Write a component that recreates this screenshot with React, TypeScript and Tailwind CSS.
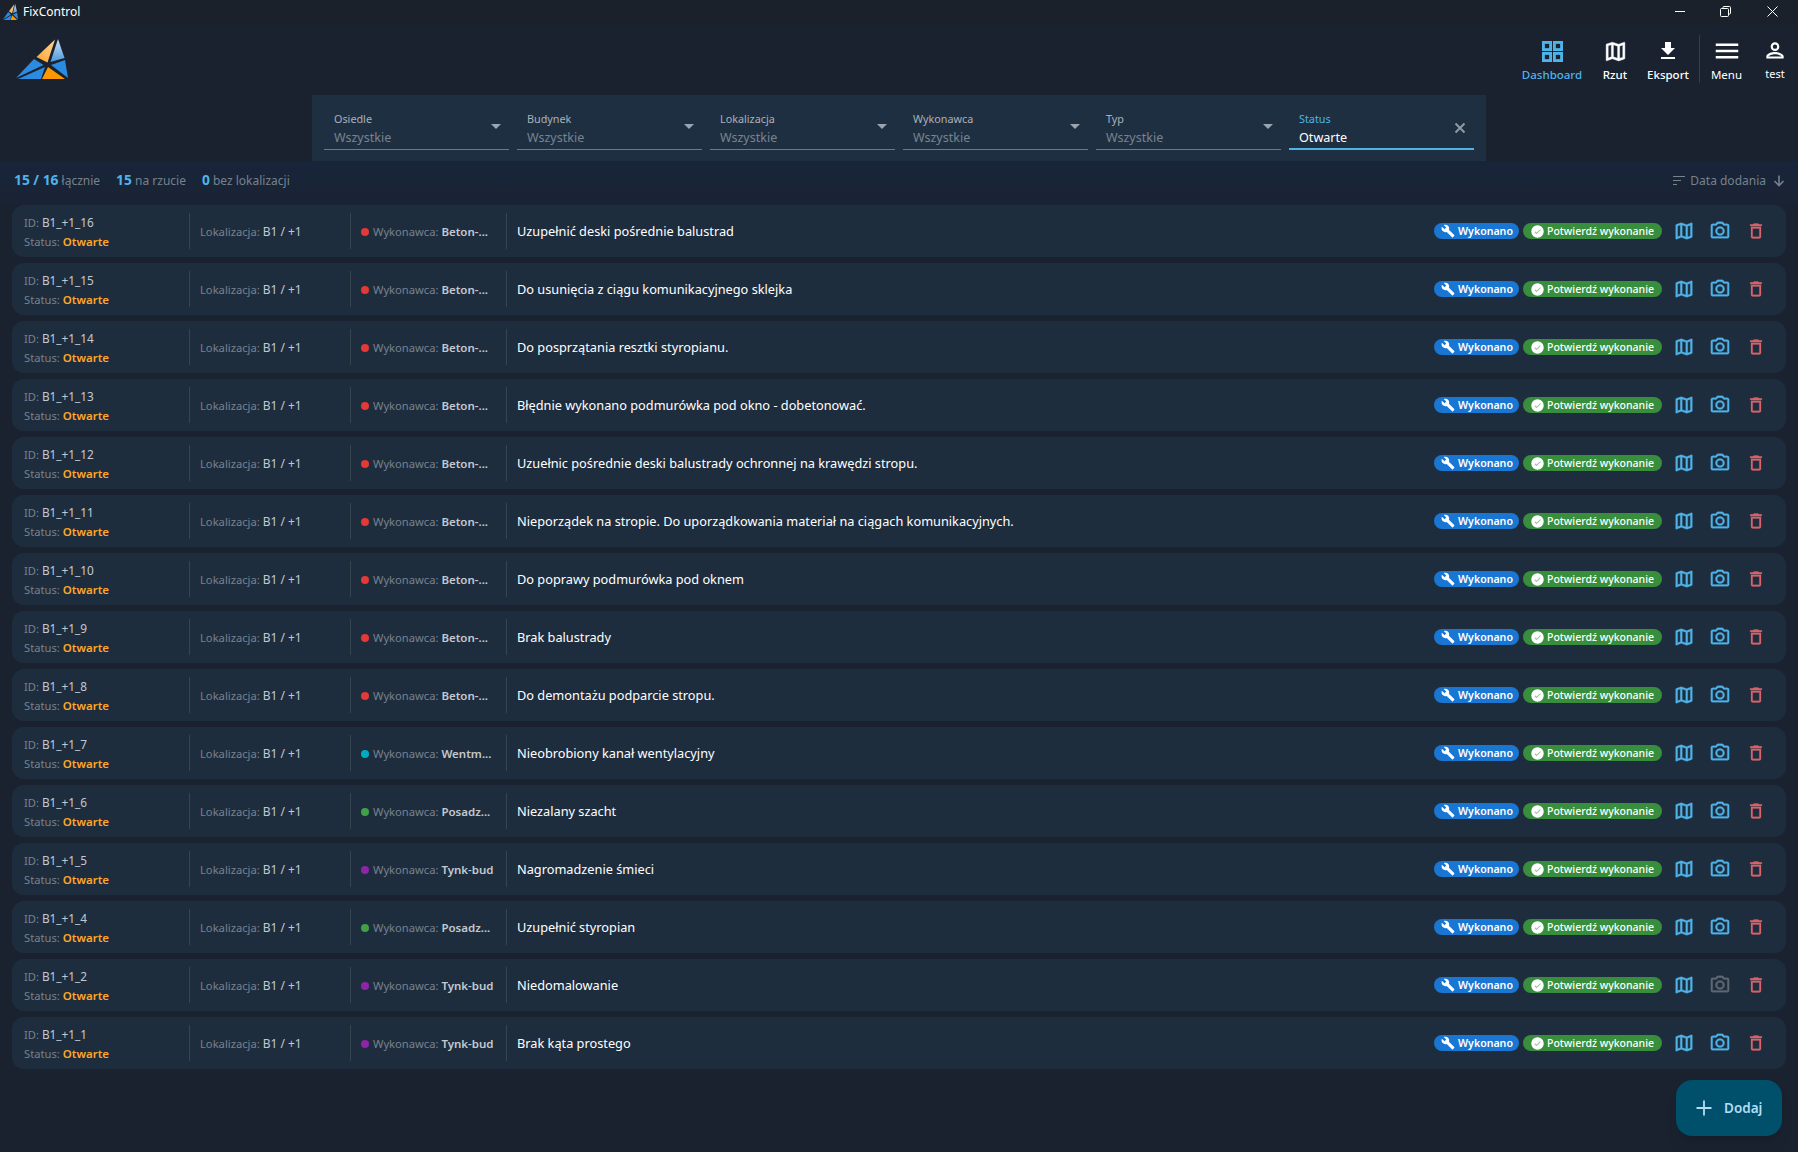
import { ReactNode } from 'react';

const Logo = ({ className }: { className: string }) => (
  <svg className={className} viewBox="0 0 52 40" fill="none" preserveAspectRatio="none">
    <defs>
      <linearGradient id="lb" x1="0" y1="0" x2="0" y2="1">
        <stop offset="0" stopColor="#cfe3f5" />
        <stop offset="1" stopColor="#4a98dc" />
      </linearGradient>
      <linearGradient id="lo" x1="1" y1="0" x2="0" y2="1">
        <stop offset="0" stopColor="#ffd79a" />
        <stop offset="1" stopColor="#ffa22e" />
      </linearGradient>
    </defs>
    <path d="M39 0.5 L20.5 18 L31.5 23.5 Z" fill="url(#lo)" />
    <path d="M42 0 L34.5 23 L48.5 19 Z" fill="url(#lb)" />
    <path d="M18 20 L0 39 L27.5 26 Z" fill="#2b8be0" />
    <path d="M29 28 L2 40 L25 40 Z" fill="#2b8be0" />
    <path d="M35 26 L49 21 L52 39 Z" fill="#2b8be0" />
    <path d="M32 28 L26 40 L49 40 Z" fill="#ff9800" />
  </svg>
);

const Caret = () => <div className="h-0 w-0 border-x-[5px] border-t-[5px] border-x-transparent border-t-[#9aa5b1]" />;

const filters = ['Osiedle', 'Budynek', 'Lokalizacja', 'Wykonawca', 'Typ'];

const Filter = ({ label }: { label: string }) => (
  <div className="relative flex h-[55px] w-[185px] flex-col justify-end border-b border-[#6b7a86] pl-[10px]">
    <div className="text-[10.8px] leading-[16px] text-[#a9b1ba]">{label}</div>
    <div className="text-[12.5px] leading-[22px] text-[#77838f]">Wszystkie</div>
    <div className="absolute right-[8px] top-[29px]">
      <Caret />
    </div>
  </div>
);

const NavItem = ({ label, w, active, light, children }: { label: string; w: string; active?: boolean; light?: boolean; children: ReactNode }) => (
  <div className={`flex flex-col items-center ${w}`}>
    <div className="flex h-[32px] items-center justify-center">{children}</div>
    <div
      className={`-mt-[1px] text-[11.5px] leading-[18px] ${light ? 'font-normal text-[#e4e6e8]' : 'font-medium'} ${
        active ? 'text-[#4fb3e8]' : 'text-white'
      }`}
    >
      {label}
    </div>
  </div>
);

const MapIcon = ({ className }: { className: string }) => (
  <svg className={className} viewBox="0 0 24 24" fill="currentColor" stroke="currentColor" strokeWidth="0.4">
    <path d="M20.5 3l-.16.03L15 5.1 9 3 3.36 4.9c-.21.07-.36.25-.36.48V20.5c0 .28.22.5.5.5l.16-.03L9 18.9l6 2.1 5.64-1.9c.21-.07.36-.25.36-.48V3.5c0-.28-.22-.5-.5-.5zM10 5.47l4 1.4v11.66l-4-1.4V5.47zm-5 .99l3-1.01v11.7l-3 1.16V6.46zm14 11.08l-3 1.01V6.86l3-1.16v11.84z" />
  </svg>
);

const CameraIcon = ({ className }: { className: string }) => (
  <svg className={className} viewBox="0 0 24 24" fill="currentColor" stroke="currentColor" strokeWidth="0.3">
    <path d="M20 4h-3.17L15 2H9L7.17 4H4c-1.1 0-2 .9-2 2v12c0 1.1.9 2 2 2h16c1.1 0 2-.9 2-2V6c0-1.1-.9-2-2-2zm0 14H4V6h4.05l1.83-2h4.24l1.83 2H20v12zM12 7a5 5 0 100 10 5 5 0 000-10zm0 8a3 3 0 110-6 3 3 0 010 6z" />
  </svg>
);

const TrashIcon = ({ className }: { className: string }) => (
  <svg className={className} viewBox="0 0 24 24" fill="currentColor" stroke="currentColor" strokeWidth="0.3">
    <path d="M6 19c0 1.1.9 2 2 2h8c1.1 0 2-.9 2-2V7H6v12zM8 9h8v10H8V9zm7.5-5l-1-1h-5l-1 1H5v2h14V4h-3.5z" />
  </svg>
);

const WrenchIcon = () => (
  <svg className="h-[14px] w-[14px] text-white" viewBox="0 0 24 24" fill="currentColor">
    <path d="M22.7 19l-9.1-9.1c.9-2.3.4-5-1.5-6.9-2-2-5-2.4-7.4-1.3L9 6 6 9 1.6 4.7C.4 7.1.9 10.1 2.9 12.1c1.9 1.9 4.6 2.4 6.9 1.5l9.1 9.1c.4.4 1 .4 1.4 0l2.3-2.3c.5-.4.5-1.1.1-1.4z" />
  </svg>
);

const CheckIcon = () => (
  <svg className="h-[13px] w-[13px]" viewBox="0 0 24 24">
    <circle cx="12" cy="12" r="11.5" fill="#fff" />
    <path d="M7 12.5l3.2 3.2L17.5 8.5" stroke="#a5c9a7" strokeWidth="2.2" fill="none" />
  </svg>
);

type Issue = { id: string; dot: string; who: string; text: string; noPhoto?: boolean };

const issues: Issue[] = [
  { id: 'B1_+1_16', dot: 'bg-[#e53935]', who: 'Beton-...', text: 'Uzupełnić deski pośrednie balustrad' },
  { id: 'B1_+1_15', dot: 'bg-[#e53935]', who: 'Beton-...', text: 'Do usunięcia z ciągu komunikacyjnego sklejka' },
  { id: 'B1_+1_14', dot: 'bg-[#e53935]', who: 'Beton-...', text: 'Do posprzątania resztki styropianu.' },
  { id: 'B1_+1_13', dot: 'bg-[#e53935]', who: 'Beton-...', text: 'Błędnie wykonano podmurówka pod okno - dobetonować.' },
  { id: 'B1_+1_12', dot: 'bg-[#e53935]', who: 'Beton-...', text: 'Uzuełnic pośrednie deski balustrady ochronnej na krawędzi stropu.' },
  { id: 'B1_+1_11', dot: 'bg-[#e53935]', who: 'Beton-...', text: 'Nieporządek na stropie. Do uporządkowania materiał na ciągach komunikacyjnych.' },
  { id: 'B1_+1_10', dot: 'bg-[#e53935]', who: 'Beton-...', text: 'Do poprawy podmurówka pod oknem' },
  { id: 'B1_+1_9', dot: 'bg-[#e53935]', who: 'Beton-...', text: 'Brak balustrady' },
  { id: 'B1_+1_8', dot: 'bg-[#e53935]', who: 'Beton-...', text: 'Do demontażu podparcie stropu.' },
  { id: 'B1_+1_7', dot: 'bg-[#00acc1]', who: 'Wentm...', text: 'Nieobrobiony kanał wentylacyjny' },
  { id: 'B1_+1_6', dot: 'bg-[#43a047]', who: 'Posadz...', text: 'Niezalany szacht' },
  { id: 'B1_+1_5', dot: 'bg-[#8e24aa]', who: 'Tynk-bud', text: 'Nagromadzenie śmieci' },
  { id: 'B1_+1_4', dot: 'bg-[#43a047]', who: 'Posadz...', text: 'Uzupełnić styropian' },
  { id: 'B1_+1_2', dot: 'bg-[#8e24aa]', who: 'Tynk-bud', text: 'Niedomalowanie', noPhoto: true },
  { id: 'B1_+1_1', dot: 'bg-[#8e24aa]', who: 'Tynk-bud', text: 'Brak kąta prostego' },
];

const Row = ({ issue }: { issue: Issue }) => (
  <div className="flex h-[52px] items-center rounded-[12px] bg-[#1e2d3e] text-[11.2px] text-[#77828e]">
    <div className="flex h-[36px] w-[178px] flex-col justify-center border-r border-[#37444f] pl-[12px] pt-[2px] leading-[19.5px]">
      <div>
        ID: <span className="text-[11.8px] text-[#c3c9cf]">{issue.id}</span>
      </div>
      <div>
        Status: <span className="text-[11.5px] font-semibold text-[#ffa726]">Otwarte</span>
      </div>
    </div>
    <div className="flex h-[36px] w-[161px] items-center border-r border-[#37444f] pl-[10px] pt-[2px]">
      Lokalizacja:&nbsp;<span className="text-[12px] text-[#c3c9cf]">B1 / +1</span>
    </div>
    <div className="flex h-[36px] w-[156px] items-center whitespace-nowrap border-r border-[#37444f] pl-[10px] pt-[2px]">
      <div className={`mr-[4px] h-[8px] w-[8px] rounded-full ${issue.dot}`} />
      Wykonawca:&nbsp;<span className="text-[11.5px] font-semibold text-[#c3c9cf]">{issue.who}</span>
    </div>
    <div className="flex-1 pl-[10px] pt-[2px] text-[12.75px] text-white">{issue.text}</div>
    <div className="flex h-[16px] w-[85px] items-center gap-[3px] rounded-full bg-[#1976d2] pl-[7px] text-[10.6px] font-semibold text-white">
      <WrenchIcon />
      <span className="pt-[1px]">Wykonano</span>
    </div>
    <div className="ml-[4px] flex h-[16px] w-[139px] items-center gap-[3px] rounded-full bg-[#388e3c] pl-[8px] text-[10.5px] font-medium text-white">
      <CheckIcon />
      <span className="pt-[1px]">Potwierdź wykonanie</span>
    </div>
    <MapIcon className="ml-[11px] h-[22px] w-[22px] text-[#4fb3e8]" />
    <CameraIcon className={`ml-[14px] h-[22px] w-[22px] ${issue.noPhoto ? 'text-[#5d6873]' : 'text-[#4fb3e8]'}`} />
    <TrashIcon className="ml-[15px] mr-[20px] h-[20px] w-[20px] text-[#d9636a]" />
  </div>
);

export default function App() {
  return (
    <div className="relative flex h-[1152px] w-[1798px] flex-col overflow-hidden bg-[#1a2230] font-['Noto_Sans',sans-serif]">
      {/* title bar */}
      <div className="flex h-[23px] items-center bg-[#1b212b] pl-[3px] text-[12px] text-white">
        <Logo className="h-[16px] w-[15px]" />
        <span className="ml-[5px]">FixControl</span>
        <div className="ml-auto flex items-center text-white">
          <div className="mr-[35px] h-px w-[10px] bg-white" />
          <svg className="mr-[36px] h-[11px] w-[11px]" viewBox="0 0 11 11" fill="none" stroke="currentColor">
            <rect x="0.5" y="2.5" width="8" height="8" rx="1" />
            <path d="M3 2.5V1.5a1 1 0 011-1h5.5a1 1 0 011 1V7a1 1 0 01-1 1h-1" />
          </svg>
          <svg className="mr-[20px] h-[11px] w-[11px]" viewBox="0 0 11 11" stroke="currentColor">
            <path d="M0.5 0.5l10 10M10.5 0.5l-10 10" />
          </svg>
        </div>
      </div>

      {/* header */}
      <div className="flex h-[72px] items-start bg-[#1a2230]">
        <Logo className="ml-[16px] mt-[16px] h-[40px] w-[52px]" />
        <div className="ml-auto mt-[12px] flex items-start">
          <NavItem label="Dashboard" w="w-[64px]" active>
            <svg className="h-[21px] w-[21px] text-[#4fb3e8]" viewBox="0 0 22 22" fill="none" stroke="currentColor" strokeWidth="3">
              <rect x="1.5" y="1.5" width="7.5" height="7.5" />
              <rect x="13" y="1.5" width="7.5" height="7.5" />
              <rect x="1.5" y="13" width="7.5" height="7.5" />
              <rect x="13" y="13" width="7.5" height="7.5" />
            </svg>
          </NavItem>
          <NavItem label="Rzut" w="w-[62px]">
            <MapIcon className="h-[25px] w-[25px] text-white" />
          </NavItem>
          <NavItem label="Eksport" w="w-[44px]">
            <svg className="h-[24px] w-[24px] text-white" viewBox="0 0 24 24" fill="currentColor">
              <path d="M5 20h14v-2H5v2zM19 9h-4V3H9v6H5l7 7 7-7z" />
            </svg>
          </NavItem>
          <div className="ml-[9px] h-[48px] w-px bg-[#333e4a]" />
          <NavItem label="Menu" w="w-[53px]" light>
            <svg className="h-[30px] w-[30px] text-white" viewBox="0 0 24 24" fill="currentColor">
              <path d="M3 18h18v-2H3v2zm0-5h18v-2H3v2zm0-7v2h18V6H3z" />
            </svg>
          </NavItem>
          <div className="flex w-[44px] flex-col items-center">
            <div className="flex h-[32px] items-center justify-center">
              <svg className="h-[26px] w-[26px] text-white" viewBox="0 0 24 24" fill="currentColor">
                <path d="M12 6a2 2 0 110 4 2 2 0 010-4m0 9c2.7 0 5.8 1.29 6 2H6c.23-.72 3.31-2 6-2M12 4a4 4 0 100 8 4 4 0 000-8zm0 9c-2.67 0-8 1.34-8 4v2h16v-2c0-2.66-5.33-4-8-4z" />
              </svg>
            </div>
            <div className="-mt-[1px] text-[11px] leading-[16px] text-white">test</div>
          </div>
          <div className="w-[1px]" />
        </div>
      </div>

      {/* filters */}
      <div className="flex justify-center">
        <div className="flex h-[66px] w-[1174px] gap-[8px] bg-[#1f2f42] pl-[12px]">
          {filters.map((f) => (
            <Filter key={f} label={f} />
          ))}
          <div className="relative flex h-[55px] w-[185px] flex-col justify-end border-b-2 border-[#4fb3e8] pl-[10px]">
            <div className="-mb-[1px] text-[10.8px] leading-[16px] text-[#4fb3e8]">Status</div>
            <div className="translate-y-[1px] text-[12.6px] leading-[22px] text-white">Otwarte</div>
            <svg className="absolute right-[8px] top-[27px] h-[12px] w-[12px] text-[#8f9aa5]" viewBox="0 0 12 12" stroke="currentColor" strokeWidth="2">
              <path d="M1.5 1.5l9 9M10.5 1.5l-9 9" />
            </svg>
          </div>
        </div>
      </div>

      {/* stats */}
      <div className="flex h-[44px] items-center justify-between bg-gradient-to-b from-[#17253a] to-[#1a2333] pb-[4px] pl-[14px] pr-[12px] text-[12px] text-[#77828e]">
        <div className="-mt-[1px] flex items-baseline">
          <span className="mr-[16px]">
            <b className="text-[13.8px] font-bold text-[#4fb3e8]">15 / 16</b> łącznie
          </span>
          <span className="mr-[16px]">
            <b className="text-[13.8px] font-bold text-[#4fb3e8]">15</b> na rzucie
          </span>
          <span>
            <b className="text-[13.8px] font-bold text-[#4fb3e8]">0</b> bez lokalizacji
          </span>
        </div>
        <div className="flex items-center">
          <svg className="mr-[5px] h-[12px] w-[12px]" viewBox="0 0 12 12" stroke="currentColor">
            <path d="M0 1.5h12M0 5.5h8M0 9.5h4" />
          </svg>
          Data dodania
          <svg className="ml-[7px] mr-[1px] h-[12px] w-[12px]" viewBox="0 0 12 12" fill="none" stroke="currentColor" strokeWidth="1.6">
            <path d="M6 0.5v10M1.5 6l4.5 4.5L10.5 6" />
          </svg>
        </div>
      </div>

      {/* list */}
      <div className="flex flex-col gap-[6px] px-[12px]">
        {issues.map((issue) => (
          <Row key={issue.id} issue={issue} />
        ))}
      </div>

      <button
        type="button"
        className="absolute bottom-[16px] right-[16px] flex h-[56px] w-[106px] items-center rounded-[16px] bg-[#004f6b] pl-[20px] text-[13.5px] font-semibold text-[#b3dcf3] shadow-lg"
      >
        <svg className="mr-[12px] h-[16px] w-[16px]" viewBox="0 0 16 16" stroke="currentColor" strokeWidth="1.8">
          <path d="M8 0.5v15M0.5 8h15" />
        </svg>
        Dodaj
      </button>
    </div>
  );
}
